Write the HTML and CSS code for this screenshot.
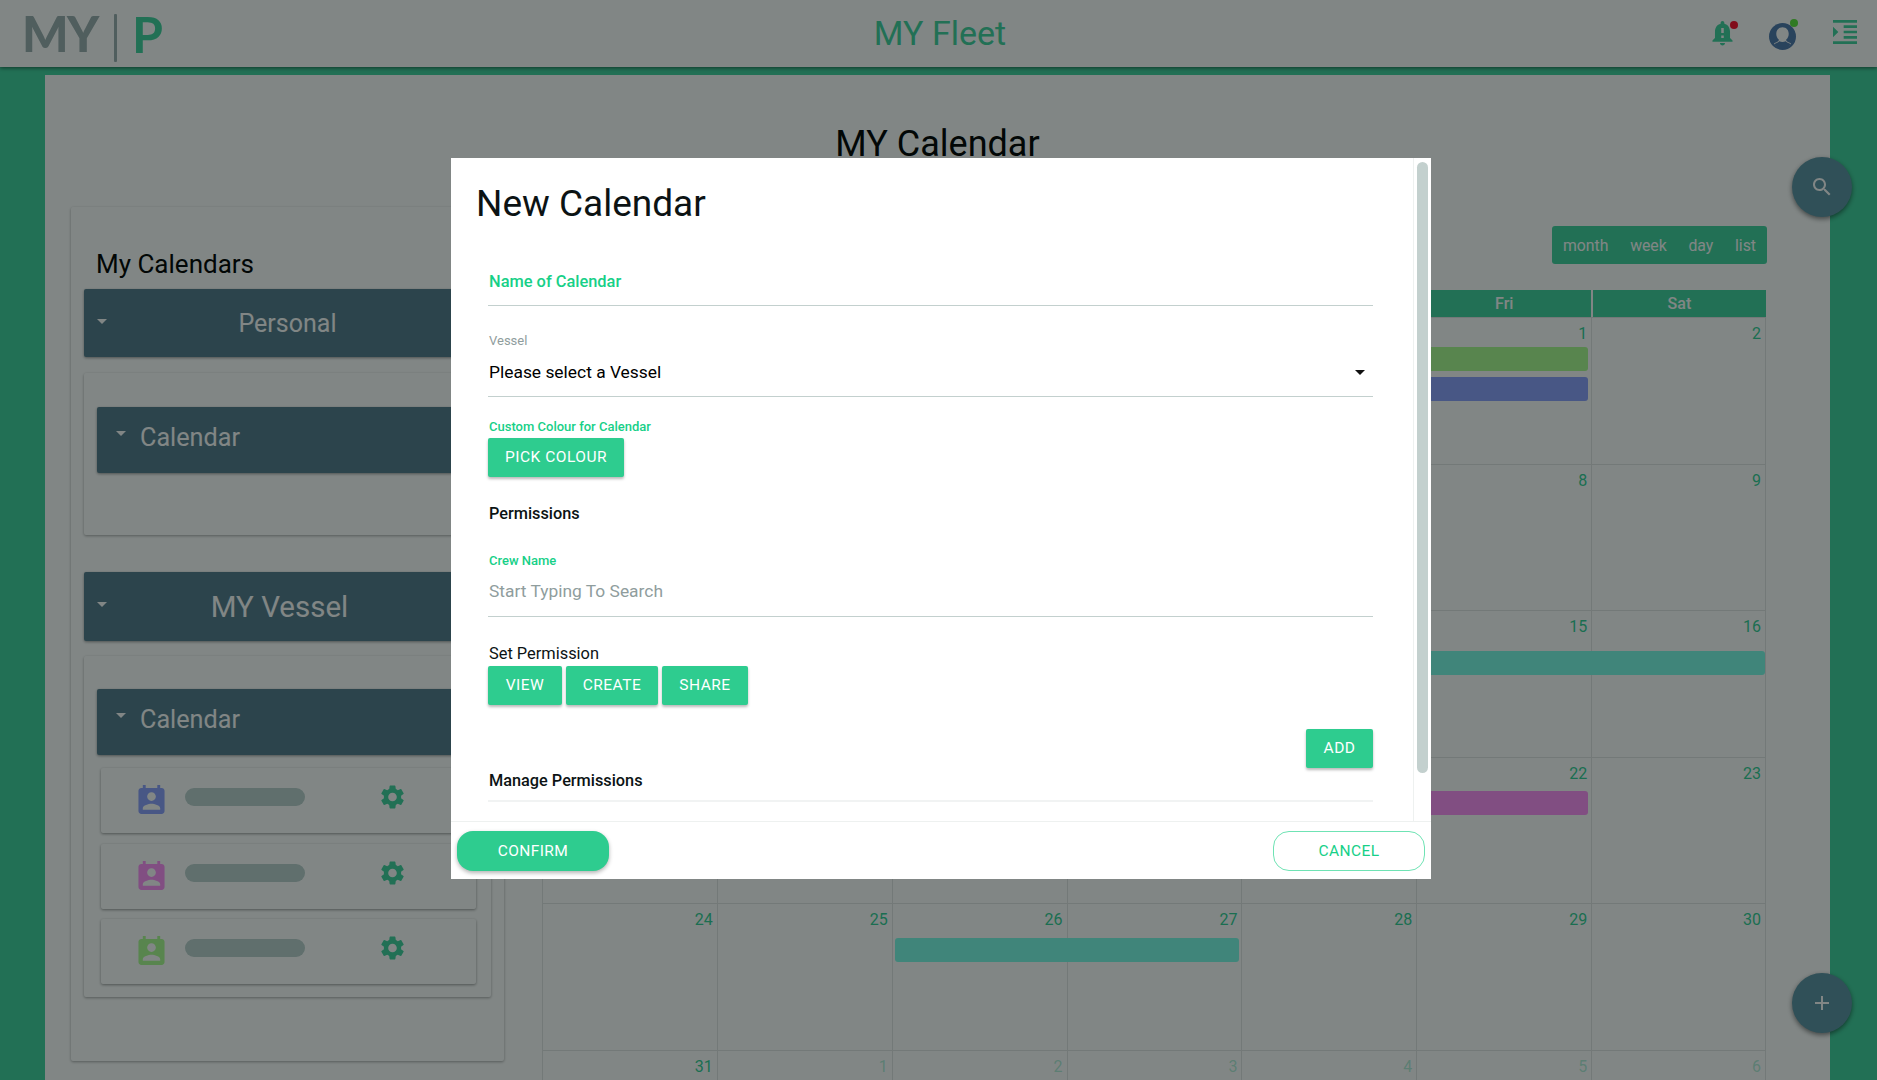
FILE: index.html
```html
<!DOCTYPE html>
<html lang="en">
<head>
<meta charset="utf-8">
<title>MY Calendar</title>
<link rel="stylesheet" href="styles.css">
</head>
<body>
<header class="topbar">
  <div class="logo"><span class="logo-my">MY</span><span class="logo-rule"></span><span class="logo-p">P</span></div>
  <div class="fleet">MY Fleet</div>
  <div class="top-icons">
    <span class="top-icon bell">
      <svg viewBox="4 2.5 16 21.5" width="21" height="27"><path d="M18 16v-5c0-3.07-1.64-5.64-4.5-6.32V4c0-.83-.67-1.5-1.5-1.5s-1.5.67-1.5 1.5v.68C7.63 5.36 6 7.92 6 11v5l-2 2v1h16v-1l-2-2zm-5 0h-2v-2h2v2zm0-4h-2V8h2v4zm-1 10c1.1 0 2-.9 2-2h-4c0 1.1.9 2 2 2z"/></svg>
      <i class="dot dot-red"></i>
    </span>
    <span class="top-icon avatar">
      <svg viewBox="0 0 26 26" width="27" height="27"><circle class="av-bg" cx="13" cy="13" r="13"/><path class="av-fg" d="M13 4c-3.600 0-6 2.800-6 6.300 0 2.300.9 4.300 2.400 5.600.3 1-.4 1.700-1.700 2.300-1.300.6-2.400 1-3 1.800C6.600 22.500 9.600 24 13 24s6.400-1.500 8.300-4c-.6-.8-1.700-1.200-3-1.800-1.300-.6-2-1.300-1.700-2.300 1.500-1.300 2.400-3.300 2.400-5.600C19 6.800 16.600 4 13 4z"/><path class="av-bg" d="M5 20.500c1.500-1.300 3.500-1.500 5-3 1.600 1 4.400 1 6 0 1.500 1.500 3.500 1.700 5 3-2 3-4.800 4.500-8 4.500s-6-1.500-8-4.500z"/></svg>
      <i class="dot dot-green"></i>
    </span>
    <span class="top-icon menu">
      <svg viewBox="3 3 18 18" width="24" height="24"><path d="M3 21h18v-2H3v2zM3 8v8l4-4-4-4zm8 9h10v-2H11v2zM3 3v2h18V3H3zm8 6h10V7H11v2zm0 4h10v-2H11v2z"/></svg>
    </span>
  </div>
</header>

<div class="shell">
  <main class="panel">
    <h1 class="page-title">MY Calendar</h1>
    <div class="columns">
      <aside class="side">
        <h2 class="side-title">My Calendars</h2>
        <div class="bar bar-main"><i class="caret"></i><span class="bar-label">Personal</span></div>
        <section class="group group-short">
          <div class="bar bar-sub"><i class="caret"></i><span>Calendar</span></div>
        </section>
        <div class="bar bar-main bar-vessel"><i class="caret"></i><span class="bar-label">MY Vessel</span></div>
        <section class="group group-vessel">
          <div class="bar bar-sub"><i class="caret"></i><span>Calendar</span></div>
          <div class="cal-row">
            <svg class="cal-icon c-blue" viewBox="3 1 18 20"><path d="M19 3h-1V1h-2v2H8V1H6v2H5c-1.110 0-2 .9-2 2v14c0 1.100.89 2 2 2h14c1.100 0 2-.9 2-2V5c0-1.100-.9-2-2-2zm-7 3c1.660 0 3 1.340 3 3s-1.340 3-3 3-3-1.340-3-3 1.340-3 3-3zm6 12H6v-1c0-2 4-3.100 6-3.100s6 1.100 6 3.100v1z"/></svg>
            <span class="pill"></span>
            <svg class="gear" viewBox="2.400 2 19.200 20"><path d="M19.140 12.940c.04-.3.060-.61.060-.94 0-.32-.020-.64-.070-.94l2.030-1.580c.18-.14.230-.41.120-.61l-1.920-3.320c-.12-.22-.37-.29-.59-.22l-2.390.96c-.5-.38-1.030-.7-1.620-.94l-.36-2.540c-.04-.24-.24-.41-.48-.41h-3.840c-.24 0-.43.170-.47.410l-.36 2.540c-.59.24-1.130.57-1.620.94l-2.390-.96c-.22-.080-.47 0-.59.22L2.740 8.870c-.12.21-.08.47.12.61l2.030 1.580c-.05.3-.090.63-.090.94s.02.64.070.94l-2.030 1.580c-.18.14-.23.41-.12.61l1.920 3.320c.12.22.37.29.59.22l2.390-.96c.5.38 1.030.7 1.620.94l.36 2.540c.05.24.24.41.48.41h3.840c.24 0 .44-.170.47-.41l.36-2.540c.59-.24 1.130-.56 1.620-.94l2.390.96c.22.080.47 0 .59-.22l1.920-3.320c.12-.22.070-.47-.12-.61l-2.010-1.580zM12 15.600c-1.980 0-3.600-1.620-3.600-3.600s1.620-3.600 3.600-3.600 3.600 1.620 3.600 3.600-1.620 3.600-3.600 3.600z"/></svg>
          </div>
          <div class="cal-row">
            <svg class="cal-icon c-purple" viewBox="3 1 18 20"><path d="M19 3h-1V1h-2v2H8V1H6v2H5c-1.110 0-2 .9-2 2v14c0 1.100.89 2 2 2h14c1.100 0 2-.9 2-2V5c0-1.100-.9-2-2-2zm-7 3c1.660 0 3 1.340 3 3s-1.340 3-3 3-3-1.340-3-3 1.340-3 3-3zm6 12H6v-1c0-2 4-3.100 6-3.100s6 1.100 6 3.100v1z"/></svg>
            <span class="pill"></span>
            <svg class="gear" viewBox="2.400 2 19.200 20"><path d="M19.140 12.940c.04-.3.060-.61.060-.94 0-.32-.020-.64-.070-.94l2.030-1.580c.18-.14.230-.41.120-.61l-1.920-3.320c-.12-.22-.37-.29-.59-.22l-2.390.96c-.5-.38-1.030-.7-1.620-.94l-.36-2.540c-.04-.24-.24-.41-.48-.41h-3.840c-.24 0-.43.170-.47.410l-.36 2.540c-.59.24-1.130.57-1.620.94l-2.390-.96c-.22-.080-.47 0-.59.22L2.740 8.870c-.12.21-.08.47.12.61l2.030 1.580c-.05.3-.090.63-.090.94s.02.64.070.94l-2.030 1.580c-.18.14-.23.41-.12.61l1.920 3.320c.12.22.37.29.59.22l2.390-.96c.5.38 1.030.7 1.620.94l.36 2.540c.05.24.24.41.48.41h3.840c.24 0 .44-.170.47-.41l.36-2.540c.59-.24 1.130-.56 1.620-.94l2.390.96c.22.080.47 0 .59-.22l1.920-3.320c.12-.22.070-.47-.12-.61l-2.010-1.580zM12 15.600c-1.980 0-3.600-1.620-3.600-3.600s1.620-3.600 3.600-3.600 3.600 1.620 3.600 3.600-1.620 3.600-3.600 3.600z"/></svg>
          </div>
          <div class="cal-row">
            <svg class="cal-icon c-green" viewBox="3 1 18 20"><path d="M19 3h-1V1h-2v2H8V1H6v2H5c-1.110 0-2 .9-2 2v14c0 1.100.89 2 2 2h14c1.100 0 2-.9 2-2V5c0-1.100-.9-2-2-2zm-7 3c1.660 0 3 1.340 3 3s-1.340 3-3 3-3-1.340-3-3 1.340-3 3-3zm6 12H6v-1c0-2 4-3.100 6-3.100s6 1.100 6 3.100v1z"/></svg>
            <span class="pill"></span>
            <svg class="gear" viewBox="2.400 2 19.200 20"><path d="M19.140 12.940c.04-.3.060-.61.060-.94 0-.32-.020-.64-.070-.94l2.030-1.580c.18-.14.230-.41.120-.61l-1.920-3.320c-.12-.22-.37-.29-.59-.22l-2.390.96c-.5-.38-1.030-.7-1.620-.94l-.36-2.540c-.04-.24-.24-.41-.48-.41h-3.840c-.24 0-.43.170-.47.410l-.36 2.540c-.59.24-1.130.57-1.620.94l-2.390-.96c-.22-.080-.47 0-.59.22L2.740 8.870c-.12.21-.08.47.12.61l2.030 1.580c-.05.3-.090.63-.090.94s.02.64.070.94l-2.030 1.580c-.18.14-.23.41-.12.61l1.920 3.320c.12.22.37.29.59.22l2.390-.96c.5.38 1.030.7 1.620.94l.36 2.540c.05.24.24.41.48.41h3.840c.24 0 .44-.170.47-.41l.36-2.540c.59-.24 1.130-.56 1.620-.94l2.390.96c.22.080.47 0 .59-.22l1.920-3.320c.12-.22.070-.47-.12-.61l-2.010-1.580zM12 15.600c-1.980 0-3.600-1.620-3.600-3.600s1.620-3.600 3.600-3.600 3.600 1.620 3.600 3.600-1.620 3.600-3.600 3.600z"/></svg>
          </div>
        </section>
      </aside>

      <section class="calendar">
        <div class="views"><span>month</span><span>week</span><span>day</span><span>list</span></div>
        <div class="dow"><span>Sun</span><span>Mon</span><span>Tue</span><span>Wed</span><span>Thu</span><span>Fri</span><span>Sat</span></div>
        <div class="week">
          <div class="day d1 muted">27</div><div class="day d2 muted">28</div><div class="day d3 muted">29</div><div class="day d4 muted">30</div><div class="day d5 muted">31</div><div class="day d6">1</div><div class="day d7">2</div>
          <div class="event ev-a ev-green"></div><div class="event ev-b ev-blue"></div>
        </div>
        <div class="week">
          <div class="day d1">3</div><div class="day d2">4</div><div class="day d3">5</div><div class="day d4">6</div><div class="day d5">7</div><div class="day d6">8</div><div class="day d7">9</div>
        </div>
        <div class="week">
          <div class="day d1">10</div><div class="day d2">11</div><div class="day d3">12</div><div class="day d4">13</div><div class="day d5">14</div><div class="day d6">15</div><div class="day d7">16</div>
          <div class="event ev-c ev-teal"></div>
        </div>
        <div class="week">
          <div class="day d1">17</div><div class="day d2">18</div><div class="day d3">19</div><div class="day d4">20</div><div class="day d5">21</div><div class="day d6">22</div><div class="day d7">23</div>
          <div class="event ev-d ev-purple"></div>
        </div>
        <div class="week">
          <div class="day d1">24</div><div class="day d2">25</div><div class="day d3">26</div><div class="day d4">27</div><div class="day d5">28</div><div class="day d6">29</div><div class="day d7">30</div>
          <div class="event ev-e ev-teal"></div>
        </div>
        <div class="week">
          <div class="day d1">31</div><div class="day d2 muted">1</div><div class="day d3 muted">2</div><div class="day d4 muted">3</div><div class="day d5 muted">4</div><div class="day d6 muted">5</div><div class="day d7 muted">6</div>
        </div>
      </section>
    </div>
  </main>
</div>

<button class="fab fab-search"><svg viewBox="0 0 24 24" width="24" height="24"><path d="M15.500 14h-.79l-.28-.27C15.410 12.590 16 11.110 16 9.500 16 5.910 13.090 3 9.500 3S3 5.910 3 9.500 5.910 16 9.500 16c1.610 0 3.090-.59 4.230-1.570l.27.28v.79l5 4.990L20.490 19l-4.990-5zm-6 0C7.010 14 5 11.990 5 9.500S7.010 5 9.500 5 14 7.010 14 9.500 11.990 14 9.500 14z"/></svg></button>
<button class="fab fab-add"><svg viewBox="0 0 24 24" width="24" height="24"><path d="M19 13h-6v6h-2v-6H5v-2h6V5h2v6h6v2z"/></svg></button>

<div class="scrim"></div>

<div class="modal">
  <div class="modal-body">
    <div class="form">
      <h2 class="modal-title">New Calendar</h2>
      <div class="field field-name"><span class="label-strong">Name of Calendar</span></div>
      <div class="field field-vessel">
        <span class="label-small">Vessel</span>
        <div class="select-row"><span>Please select a Vessel</span><i class="select-caret"></i></div>
      </div>
      <div class="colour-label label-accent">Custom Colour for Calendar</div>
      <button class="btn btn-pick">Pick Colour</button>
      <div class="heading heading-perm">Permissions</div>
      <div class="crew-label label-accent">Crew Name</div>
      <div class="field field-crew"><span class="placeholder">Start Typing To Search</span></div>
      <div class="set-label">Set Permission</div>
      <div class="btn-row">
        <button class="btn">View</button><button class="btn">Create</button><button class="btn">Share</button>
      </div>
      <div class="add-row"><button class="btn btn-add">Add</button></div>
      <div class="heading heading-manage">Manage Permissions</div>
    </div>
    <div class="rail"><div class="thumb"></div></div>
  </div>
  <footer class="modal-foot">
    <button class="foot-btn confirm">Confirm</button>
    <button class="foot-btn cancel">Cancel</button>
  </footer>
</div>
</body>
</html>
```
FILE: styles.css
```css
:root {
  --ink: #000;
  --accent-dim: #41d39f;
  --navy-dim: #557b8d;
  --fab-dim: #5d93a5;
  --line-dim: #e2e5e5;
  --mint: #2ecc8f;
  --mint-text: #17d088;
  --rule: #c3d0ce;
}
* { box-sizing: border-box; }
html, body { height: 100%; }
body {
  margin: 0;
  height: 1080px;
  overflow: hidden;
  background: var(--accent-dim);
  font-family: Roboto, "Liberation Sans", sans-serif;
  color: var(--ink);
  display: flex;
  flex-direction: column;
}

/* top bar */
.topbar {
  height: 67px;
  flex: none;
  background: #fff;
  box-shadow: 0 1px 4px rgba(0,0,0,.55);
  display: grid;
  grid-template-columns: 1fr auto 1fr;
  align-items: center;
  position: relative;
  z-index: 1;
}
.logo { display: flex; align-items: center; padding-left: 22px; height: 67px; }
.logo-my { font: 900 49px/1 Lato, sans-serif; color: #9daeb0; letter-spacing: -1.500px; }
.logo-rule { width: 3px; height: 48px; margin: 8px 15px 0 16px; background: #9daeb0; border-radius: 1px; }
.logo-p { font: 700 50px/1 Lato, sans-serif; color: var(--accent-dim); }
.fleet { font-size: 34px; line-height: 40px; margin: -2px 0 0 3px; color: var(--accent-dim); }
.top-icons { display: flex; justify-content: flex-end; align-items: center; padding-right: 20px; }
.top-icon { position: relative; display: block; line-height: 0; }
.top-icon svg { fill: var(--accent-dim); }
.bell { margin: 2px 36px 0 0; }
.avatar { margin: 5px 37px 0 0; }
.menu { margin-top: -3px; }
.avatar .av-bg { fill: #4f78ad; }
.avatar .av-fg { fill: #fff; }
.dot { position: absolute; width: 8px; height: 8px; border-radius: 50%; }
.dot-red { background: #ff0c2b; top: 0; right: -5px; }
.dot-green { background: #5ce63a; top: -4px; right: -2px; }

/* page shell */
.shell { flex: 1; min-height: 0; padding: 8px 47px 0 45px; display: flex; }
.panel { flex: 1; background: #fff; overflow: hidden; display: flex; flex-direction: column; }
.page-title { flex: none; margin: 47px 0 0; font-size: 36px; font-weight: 400; line-height: 44px; text-align: center; height: 85px; }
.columns { flex: none; display: flex; padding-left: 26px; gap: 38px; align-items: flex-start; }

/* left column */
.side {
  width: 433px;
  height: 854px;
  flex: none;
  padding: 0 13px;
  background: #fff;
  box-shadow: 0 1px 3px rgba(0,0,0,.35);
  border-radius: 2px;
}
.side-title { margin: 0; padding: 41px 0 0 12px; height: 82px; font-size: 26px; line-height: 32px; font-weight: 400; }
.bar {
  display: flex;
  align-items: center;
  background: var(--navy-dim);
  color: #fff;
  border-radius: 2px;
  box-shadow: 0 1px 3px rgba(0,0,0,.4);
  position: relative;
}
.bar-main { height: 68px; font-size: 25px; }
.bar-label { flex: 1; text-align: center; }
.bar-vessel { height: 69px; font-size: 29.500px; }
.bar-vessel .bar-label { padding-right: 16px; }
.caret {
  position: absolute;
  left: 13px;
  top: 30px;
  border-left: 5px solid transparent;
  border-right: 5px solid transparent;
  border-top: 5px solid #fff;
}
.bar-sub { height: 66px; margin-right: 0; padding: 0 0 5px 43px; font-size: 25.200px; }
.bar-sub .caret { left: 19px; top: 24px; }
.group {
  margin-top: 16px;
  padding: 34px 15px 13px 13px;
  background: #fff;
  border-radius: 2px;
  box-shadow: 0 1px 3px rgba(0,0,0,.35);
}
.group-short { height: 162px; margin-bottom: 37px; }
.group-vessel { margin-top: 15px; padding-top: 33px; }
.cal-row {
  height: 65px;
  margin: 13px 0 0 4px;
  padding-left: 37px;
  display: flex;
  align-items: flex-start;
  border-radius: 2px;
  background: #fff;
  box-shadow: 0 1px 3px rgba(0,0,0,.4);
}
.cal-row + .cal-row { margin-top: 11px; }
.cal-row:last-child { margin-top: 10px; }
.cal-icon { width: 27px; height: 29px; margin-top: 17px; flex: none; }
.c-blue { fill: #8da1ff; }
.c-purple { fill: #ff8ff9; }
.c-green { fill: #adfd91; }
.pill { width: 120px; height: 18px; margin: 20px 0 0 20px; border-radius: 9px; background: #bcd0ce; }
.gear { width: 23px; height: 24px; margin: 17px 0 0 76px; fill: var(--accent-dim); }

/* calendar */
.calendar { width: 1224px; flex: none; }
.views {
  margin: 19px -1px 26px auto;
  width: 215px;
  height: 38px;
  padding: 0 11px;
  background: var(--accent-dim);
  border-radius: 3px;
  color: #fff;
  font-size: 15.800px;
  display: flex;
  justify-content: space-between;
  align-items: center;
}
.dow { display: grid; grid-template-columns: repeat(7, 1fr); gap: 0 2px; height: 27px; }
.dow span {
  background: var(--accent-dim);
  color: #fff;
  font-size: 16px;
  font-weight: 500;
  line-height: 27px;
  text-align: center;
}
.week {
  display: grid;
  grid-template-columns: repeat(7, 1fr);
  grid-template-rows: 30px 30px 30px 1fr;
  height: 146.600px;
  border-top: 1px solid var(--line-dim);
}
.day {
  grid-row: 1 / -1;
  border-left: 1px solid var(--line-dim);
  text-align: right;
  padding: 5px 4px 0 0;
  font-size: 16px;
  line-height: 22px;
  color: #33cf96;
}
.d7 { border-right: 1px solid var(--line-dim); }
.d1 { grid-column: 1; } .d2 { grid-column: 2; } .d3 { grid-column: 3; } .d4 { grid-column: 4; }
.d5 { grid-column: 5; } .d6 { grid-column: 6; } .d7 { grid-column: 7; }
.muted { color: rgba(65,211,159,.4); }
.event { height: 24px; margin: 0 3px 0 3px; border-radius: 3px; }
.ev-green { background: #adfd91; }
.ev-blue { background: #8da1ff; }
.ev-teal { background: #7dfde9; }
.ev-purple { background: #ff8ff9; }
.ev-a { grid-row: 2; grid-column: 4 / 7; margin-top: -1px; }
.ev-b { grid-row: 3; grid-column: 4 / 7; margin-top: -1px; }
.ev-c { grid-row: 2; grid-column: 4 / 8; margin: 10px 1px 0 3px; }
.ev-d { grid-row: 2; grid-column: 4 / 7; margin-top: 3px; }
.ev-e { grid-row: 2; grid-column: 3 / 5; margin: 4px 2px 0 3px; }

/* floating buttons */
.fab {
  position: fixed;
  z-index: 2;
  left: 1792px;
  width: 60px;
  height: 60px;
  padding: 0;
  border: 0;
  border-radius: 50%;
  background: var(--fab-dim);
  box-shadow: 0 2px 5px rgba(0,0,0,.5);
  display: flex;
  align-items: center;
  justify-content: center;
}
.fab svg { fill: #fff; }
.fab-search { top: 157px; }
.fab-add { top: 973px; }

/* overlay */
.scrim { position: fixed; z-index: 3; inset: 0; background: rgba(3,13,11,.5); }

/* dialog */
.modal {
  position: fixed;
  z-index: 4;
  left: 451px;
  top: 158px;
  width: 980px;
  height: 721px;
  background: #fff;
  display: flex;
  flex-direction: column;
}
.modal-body { flex: 1; min-height: 0; display: flex; }
.form { flex: 1; min-width: 0; padding: 0 40px 0 37px; overflow: hidden; }
.modal-title { margin: 0 0 0 -12px; padding-top: 23px; height: 101px; font-size: 37px; line-height: 46px; font-weight: 400; color: #0c1314; }
.label-strong { padding-left: 1px; font-size: 16.400px; font-weight: 500; color: var(--mint-text); }
.field { border-bottom: 1px solid var(--rule); }
.field-name { height: 47px; padding-top: 13px; line-height: 19px; }
.label-small { display: block; padding-left: 1px; font-size: 13px; line-height: 16px; color: #8f9d9d; }
.field-vessel { height: 91px; padding-top: 27px; }
.select-row { display: flex; justify-content: space-between; align-items: center; height: 24px; margin-top: 11px; padding-left: 1px; font-size: 17.400px; }
.select-caret { margin-right: 8px; border-left: 5px solid transparent; border-right: 5px solid transparent; border-top: 5px solid #111; }
.label-accent { padding-left: 1px; font-size: 13px; font-weight: 500; color: var(--mint-text); line-height: 16px; }
.colour-label { margin-top: 22px; }
.btn {
  height: 39px;
  padding: 0 0 2px;
  border: 0;
  border-radius: 2px;
  background: var(--mint);
  color: #fff;
  font: 400 15.500px Roboto, sans-serif;
  text-transform: uppercase;
  letter-spacing: .5px;
  box-shadow: 0 2px 3px rgba(0,0,0,.28);
  display: block;
}
.btn-pick { width: 136px; margin-top: 3px; }
.heading { padding-left: 1px; font-size: 16.300px; font-weight: 500; line-height: 20px; color: #0c1314; }
.heading-perm { margin-top: 27px; }
.crew-label { margin-top: 29px; }
.field-crew { height: 48px; padding: 10px 0 0 1px; font-size: 17.400px; line-height: 24px; }
.placeholder { color: #8f9d9d; }
.set-label { margin-top: 27px; padding-left: 1px; font-size: 16.400px; line-height: 20px; color: #0c1314; }
.btn-row { display: grid; grid-template-columns: 74px 92px 86px; gap: 4px; margin-top: 2px; }
.add-row { display: flex; justify-content: flex-end; margin-top: 24px; }
.btn-add { width: 67px; }
.heading-manage { margin-top: 2px; padding: 0 0 8px 1px; font-size: 16.300px; line-height: 22px; border-bottom: 2px solid #f1f3f3; }
.rail { width: 18px; flex: none; border-left: 1px solid #eef1f0; padding: 4px 3px 0 3px; }
.thumb { width: 11px; height: 611px; background: var(--rule); border-radius: 6px; }
.modal-foot {
  height: 58px;
  flex: none;
  border-top: 1px solid #eef1f0;
  display: flex;
  justify-content: space-between;
  padding: 9px 6px 0 6px;
}
.foot-btn {
  height: 40px;
  border-radius: 16px;
  font: 400 15.500px Roboto, sans-serif;
  text-transform: uppercase;
  letter-spacing: .4px;
}
.confirm { width: 152px; border: 0; background: var(--mint); color: #fff; box-shadow: 0 2px 4px rgba(0,0,0,.3); }
.cancel { width: 152px; background: #fff; border: 1px solid #6fe3b4; color: var(--mint-text); }
```
